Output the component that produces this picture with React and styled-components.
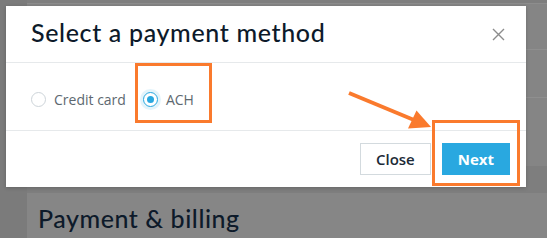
import styled, { createGlobalStyle } from "styled-components";

const GlobalStyle = createGlobalStyle`
    html, body {
        margin: 0;
        padding: 0;
        width: 547px;
        height: 238px;
        overflow: hidden;
        background: #7e7e7e;
    }
`;

const App = () => {
    return (
        <Page>
            <GlobalStyle />
            <Sidebar />
            <Main>
                <TopCard>
                    <TableRow $h={45} />
                    <TableRow $h={47} />
                    <TableRow $h={68} $last />
                </TopCard>
                <BillingCard>
                    <CardTitle>Payment &amp; billing</CardTitle>
                </BillingCard>
            </Main>

            <Modal>
                <ModalHeader>
                    <ModalTitle>Select a payment method</ModalTitle>
                    <CloseIcon aria-label="Close">
                        <svg width="13" height="13" viewBox="0 0 13 13">
                            <path d="M1 1 L12 12 M12 1 L1 12" stroke="#8c8c8c" strokeWidth="1.4" fill="none" />
                        </svg>
                    </CloseIcon>
                </ModalHeader>
                <ModalBody>
                    <Option>
                        <Radio />
                        <OptionLabel>Credit card</OptionLabel>
                    </Option>
                    <Option>
                        <Radio $checked />
                        <OptionLabel>ACH</OptionLabel>
                    </Option>
                </ModalBody>
                <ModalFooter>
                    <Button>Close</Button>
                    <Button $primary>Next</Button>
                </ModalFooter>
            </Modal>

            <Highlight $x={135} $y={63} $w={77} $h={60} />
            <Highlight $x={432} $y={120} $w={88} $h={66} />
            <Arrow width="547" height="238" viewBox="0 0 547 238">
                <line x1="349" y1="93" x2="414" y2="120" stroke="#fa7a2d" strokeWidth="4" />
                <polygon points="431,127 408,128.5 416.5,110.5" fill="#fa7a2d" />
            </Arrow>
        </Page>
    )
}

const Page = styled.div`
    position: relative;
    display: flex;
    width: 547px;
    height: 238px;
    overflow: hidden;
    background: #7e7e7e;
`;

const Sidebar = styled.div`
    width: 27px;
    flex-shrink: 0;
    background: #7b7b7b;
`;

const Main = styled.div`
    flex: 1;
    display: flex;
    flex-direction: column;
`;

const TopCard = styled.div`
    margin-top: 3px;
    background: #858585;
    border-top: 1px solid #8d8d8d;
    display: flex;
    flex-direction: column;
`;

const TableRow = styled.div`
    height: ${p => p.$h}px;
    border-bottom: ${p => (p.$last ? "none" : "1px solid #8f8f8f")};
`;

const BillingCard = styled.div`
    margin-top: 27px;
    flex: 1;
    background: #868686;
    padding: 10px 12px 10px 11px;
`;

const CardTitle = styled.h2`
    margin: 0;
    font-family: "Lato", "Open Sans", sans-serif;
    font-weight: 500;
    font-size: 25px;
    letter-spacing: 0.55px;
    color: #0d1a2a;
`;

const Modal = styled.div`
    position: absolute;
    top: 6px;
    left: 6px;
    width: 520px;
    height: 181px;
    background: #fff;
    box-shadow: 0 1px 4px rgba(0, 0, 0, 0.2);
    display: flex;
    flex-direction: column;
`;

const ModalHeader = styled.div`
    height: 56px;
    border-bottom: 1px solid #e6e9eb;
    display: flex;
    align-items: center;
    justify-content: space-between;
    padding: 0 21px 0 25px;
`;

const ModalTitle = styled.h1`
    margin: 0 0 4px;
    font-family: "Lato", "Open Sans", sans-serif;
    font-weight: 500;
    font-size: 25px;
    letter-spacing: 0.65px;
    color: #0d1a2a;
`;

const CloseIcon = styled.span`
    display: flex;
    width: 13px;
    height: 13px;
`;

const ModalBody = styled.div`
    height: 68px;
    border-bottom: 1px solid #e6e9eb;
    display: flex;
    align-items: center;
    gap: 17px;
    padding: 6px 25px 0;
    box-sizing: border-box;
`;

const Option = styled.label`
    display: flex;
    align-items: center;
    gap: 8px;
`;

const Radio = styled.span`
    position: relative;
    width: 15px;
    height: 15px;
    box-sizing: border-box;
    border-radius: 50%;
    border: 1px solid ${p => (p.$checked ? "#29a8e0" : "#cdd4d9")};
    box-shadow: ${p => (p.$checked ? "0 0 0 3px rgba(41, 168, 224, 0.13)" : "none")};
    background: #fff;

    &::after {
        content: "";
        display: ${p => (p.$checked ? "block" : "none")};
        position: absolute;
        top: 3px;
        left: 3px;
        width: 7px;
        height: 7px;
        border-radius: 50%;
        background: #29a8e0;
    }
`;

const OptionLabel = styled.span`
    font-family: "Open Sans", sans-serif;
    font-size: 14px;
    color: #5d6870;
`;

const ModalFooter = styled.div`
    flex: 1;
    display: flex;
    justify-content: flex-end;
    align-items: flex-start;
    gap: 11px;
    padding: 12px 16px 0;
`;

const Button = styled.button`
    height: 32px;
    padding: 0 15px;
    font-family: "Open Sans", sans-serif;
    font-size: 15px;
    font-weight: ${p => (p.$primary ? 700 : 600)};
    color: ${p => (p.$primary ? "#fff" : "#1c2a37")};
    background: ${p => (p.$primary ? "#29a8e0" : "#fff")};
    border: 1px solid ${p => (p.$primary ? "#29a8e0" : "#d3dade")};
    border-radius: 0;
`;

const Highlight = styled.div`
    position: absolute;
    left: ${p => p.$x}px;
    top: ${p => p.$y}px;
    width: ${p => p.$w}px;
    height: ${p => p.$h}px;
    box-sizing: border-box;
    border: 3.5px solid #fa7a2d;
`;

const Arrow = styled.svg`
    position: absolute;
    top: 0;
    left: 0;
    pointer-events: none;
`;

export default App;
